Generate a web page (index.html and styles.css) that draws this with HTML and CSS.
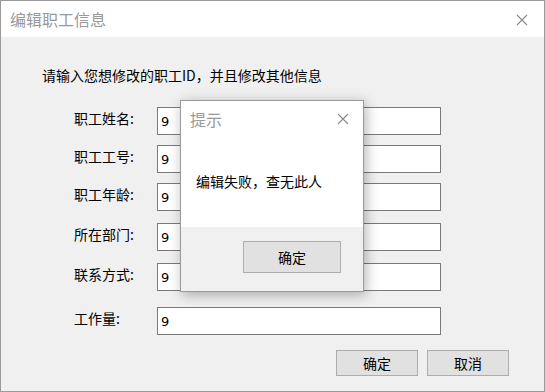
FILE: index.html
```html
<!DOCTYPE html>
<html lang="zh-CN">
<head>
  <meta charset="UTF-8">
  <link rel="stylesheet" href="styles.css">
  <title>编辑职工信息</title>
</head>
<body>
<div class="window">
  <div class="titlebar">
    <span class="title">编辑职工信息</span>
    <span class="close">
      <svg width="12" height="12" viewBox="0 0 12 12"><path d="M1 1L11 11M11 1L1 11" stroke="#8a8a8a" stroke-width="1.1" fill="none"/></svg>
    </span>
  </div>
  <div class="content">
    <p class="hint">请输入您想修改的职工ID，并且修改其他信息</p>
    <div class="form">
      <div class="row"><label>职工姓名:</label><input type="text" value="9"></div>
      <div class="row"><label>职工工号:</label><input type="text" value="9"></div>
      <div class="row"><label>职工年龄:</label><input type="text" value="9"></div>
      <div class="row wide"><label>所在部门:</label><input type="text" value="9"></div>
      <div class="row wide"><label>联系方式:</label><input type="text" value="9"></div>
      <div class="row last"><label>工作量:</label><input type="text" value="9"></div>
    </div>
    <div class="actions">
      <button>确定</button>
      <button>取消</button>
    </div>
  </div>

  <div class="dialog">
    <div class="dialog-top">
      <div class="dialog-head">
        <span class="dialog-title">提示</span>
        <svg width="12" height="12" viewBox="0 0 12 12"><path d="M1 1L11 11M11 1L1 11" stroke="#8a8a8a" stroke-width="1.1" fill="none"/></svg>
      </div>
      <p class="message">编辑失败，查无此人</p>
    </div>
    <div class="dialog-bottom">
      <button>确定</button>
    </div>
  </div>
</div>
</body>
</html>
```

FILE: styles.css
```css
body {
  margin: 0;
  font-family: "Noto Sans CJK SC", sans-serif;
  font-size: 14px;
  color: #000;
}

.window {
  position: relative;
  width: 545px;
  height: 392px;
  box-sizing: border-box;
  border: 1px solid #9a9a9a;
  background: #f0f0f0;
  display: flex;
  flex-direction: column;
}

.titlebar {
  height: 36px;
  background: #fff;
  display: flex;
  align-items: center;
  justify-content: space-between;
  padding: 0 16px 0 9px;
}

.title {
  font-size: 16px;
  color: #999;
}

.close {
  display: flex;
  margin-top: 1px;
}

.content {
  flex: 1;
  padding: 28px 35px 0 41px;
}

.hint {
  margin: 0;
  line-height: 20px;
}

.form {
  margin: 22px 0 0 32px;
  display: flex;
  flex-direction: column;
}

.row {
  display: flex;
  align-items: flex-start;
  height: 28px;
}

.row + .row {
  margin-top: 10px;
}

.row.wide {
  margin-top: 12px;
}

.row.last {
  margin-top: 16px;
}

.row label {
  width: 83px;
  line-height: 22px;
}

.row input {
  width: 284px;
  height: 28px;
  box-sizing: border-box;
  border: 1px solid #7a7a7a;
  background: #fff;
  padding: 0 3px;
  font-family: "DejaVu Sans", sans-serif;
  font-size: 13px;
  color: #000;
}

.actions {
  display: flex;
  justify-content: flex-end;
  gap: 9px;
  margin-top: 15px;
}

button {
  width: 82px;
  height: 26px;
  border: 1px solid #adadad;
  background: #e1e1e1;
  font-family: "Noto Sans CJK SC", sans-serif;
  font-size: 14px;
  color: #000;
  padding: 0;
}

.dialog {
  position: absolute;
  left: 179px;
  top: 99px;
  width: 184px;
  height: 192px;
  box-sizing: border-box;
  border: 1px solid #9a9a9a;
  background: #f0f0f0;
  box-shadow: 2px 3px 12px rgba(0, 0, 0, 0.3);
  display: flex;
  flex-direction: column;
}

.dialog-top {
  height: 126px;
  background: #fff;
}

.dialog-head {
  display: flex;
  justify-content: space-between;
  align-items: center;
  padding: 7px 14px 0 9px;
  height: 22px;
}

.dialog-title {
  font-size: 16px;
  color: #999;
}

.message {
  margin: 41px 0 0 15px;
  line-height: 20px;
}

.dialog-bottom {
  flex: 1;
  display: flex;
  justify-content: flex-end;
  align-items: flex-start;
  padding: 14px 22px 0 0;
}

.dialog-bottom button {
  width: 98px;
  height: 32px;
}
```
